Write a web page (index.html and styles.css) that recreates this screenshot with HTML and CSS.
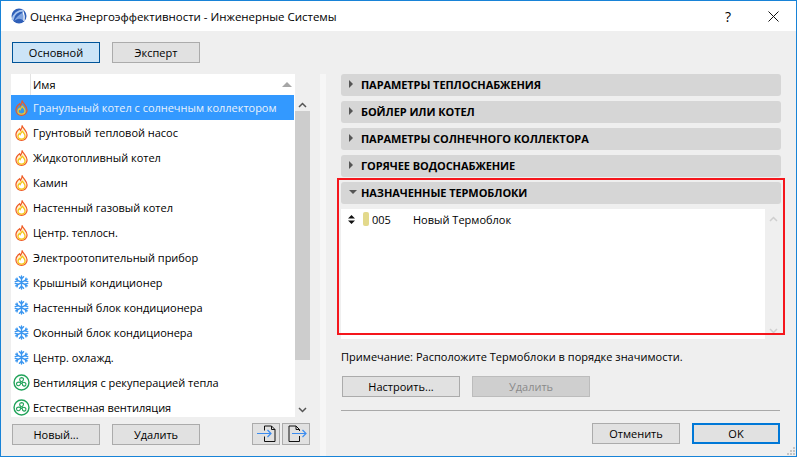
FILE: index.html
```html
<!DOCTYPE html>
<html lang="ru">
<head>
<meta charset="utf-8">
<title>Оценка Энергоэффективности - Инженерные Системы</title>
<link rel="stylesheet" href="styles.css">
</head>
<body>
<svg class="defs" width="0" height="0" aria-hidden="true">
  <symbol id="flame" viewBox="0 0 14 18">
    <path d="M7.500 0.800C8.200 3.300 6.500 4.500 6 6.200C5.500 5.500 5.200 5 5 4.300C2.600 6 1 8.300 1 11C1 14.500 3.600 17 7 17C10.400 17 13 14.500 13 11.200C13 7 9.200 5 7.500 0.800Z" fill="#fff3cf" stroke="#ef5a24" stroke-width="1.300"/>
    <path d="M7.700 6.500C7.800 8.300 6 9 5.600 10.500C5.300 10.100 5 9.900 4.800 9.500C3.700 10.500 3.200 11.500 3.200 12.500C3.200 14.300 4.900 15.500 7 15.500C9.100 15.500 10.800 14.200 10.800 12.300C10.800 10 8.800 8.700 7.700 6.500Z" fill="#fff" stroke="#f5c518" stroke-width="1.400"/>
  </symbol>
  <symbol id="flame-sel" viewBox="0 0 14 18">
    <path d="M7.500 0.800C8.200 3.300 6.500 4.500 6 6.200C5.500 5.500 5.200 5 5 4.300C2.600 6 1 8.300 1 11C1 14.500 3.600 17 7 17C10.400 17 13 14.500 13 11.200C13 7 9.200 5 7.500 0.800Z" fill="#4a93dc" stroke="#e8592a" stroke-width="1.300"/>
    <path d="M7.700 6.500C7.800 8.300 6 9 5.600 10.500C5.300 10.100 5 9.900 4.800 9.500C3.700 10.500 3.200 11.500 3.200 12.500C3.200 14.300 4.900 15.500 7 15.500C9.100 15.500 10.800 14.200 10.800 12.300C10.800 10 8.800 8.700 7.700 6.500Z" fill="#3399ee" stroke="#f2c72c" stroke-width="1.400"/>
  </symbol>
  <symbol id="snow" viewBox="0 0 16 16">
    <g stroke="#3a96f0" stroke-width="1.500" fill="none" stroke-linecap="round">
      <path d="M8 1V15M1.900 4.500L14.100 11.500M14.100 4.500L1.900 11.500"/>
      <path d="M5.800 1.800L8 4L10.200 1.800M5.800 14.200L8 12L10.200 14.200M1.300 7L3.900 6.300L3.200 3.300M14.700 9L12.100 9.700L12.800 12.700M14.700 7L12.100 6.300L12.800 3.300M1.300 9L3.900 9.700L3.200 12.700"/>
    </g>
  </symbol>
  <symbol id="fan" viewBox="0 0 18 18">
    <circle cx="9" cy="9" r="7.900" fill="#fff" stroke="#21a35a" stroke-width="1.500"/>
    <g fill="none" stroke="#21a35a" stroke-width="1.200">
      <circle cx="9" cy="9" r="1"/>
      <path d="M8.500 8C6.500 7 6.500 4 9 3.800C11.500 3.800 12 6 9.700 8"/>
      <path d="M10 9.200C12 8 14.500 9.500 13.500 11.800C12.300 13.700 10 13 9.800 10.200"/>
      <path d="M8 9.700C8 12 5.500 13.500 4 11.500C3 9.500 4.700 7.800 7.800 8.900"/>
    </g>
  </symbol>
</svg>

<div class="window">
  <header class="titlebar">
    <svg class="logo" width="16" height="16" viewBox="0 0 16 16">
      <circle cx="8" cy="8" r="7.500" fill="#2f5fb8"/>
      <path d="M1.500 12C2.500 6 7 2.500 12.500 2.500" fill="none" stroke="#a8c4ee" stroke-width="2"/>
      <path d="M3 13.500C5 9 8 7 12 4.500C13 7 13.500 10 13 13C9 9.500 6 10.500 3 13.500Z" fill="#7ea3e0"/>
      <path d="M12 3.500C13.300 6.500 13.500 10 13 13" fill="none" stroke="#fff" stroke-width="1.200"/>
    </svg>
    <span class="title">Оценка Энергоэффективности - Инженерные Системы</span>
    <span class="help">?</span>
    <svg class="close" width="11" height="11" viewBox="0 0 11 11"><path d="M0.500 0.500L10.500 10.500M10.500 0.500L0.500 10.500" stroke="#111" stroke-width="1" fill="none"/></svg>
  </header>

  <div class="main">
    <section class="left">
      <div class="btn-row tabs">
        <button class="btn active">Основной</button>
        <button class="btn">Эксперт</button>
      </div>
      <div class="listwrap">
        <div class="list">
          <div class="list-head">
            <span class="head-cell">Имя</span>
            <span class="sort"></span>
          </div>
          <div class="row selected"><svg class="ic flame"><use href="#flame-sel"/></svg><span>Гранульный котел с солнечным коллектором</span></div>
          <div class="row"><svg class="ic flame"><use href="#flame"/></svg><span>Грунтовый тепловой насос</span></div>
          <div class="row"><svg class="ic flame"><use href="#flame"/></svg><span>Жидкотопливный котел</span></div>
          <div class="row"><svg class="ic flame"><use href="#flame"/></svg><span>Камин</span></div>
          <div class="row"><svg class="ic flame"><use href="#flame"/></svg><span>Настенный газовый котел</span></div>
          <div class="row"><svg class="ic flame"><use href="#flame"/></svg><span>Центр. теплосн.</span></div>
          <div class="row"><svg class="ic flame"><use href="#flame"/></svg><span>Электроотопительный прибор</span></div>
          <div class="row"><svg class="ic snow"><use href="#snow"/></svg><span>Крышный кондиционер</span></div>
          <div class="row"><svg class="ic snow"><use href="#snow"/></svg><span>Настенный блок кондиционера</span></div>
          <div class="row"><svg class="ic snow"><use href="#snow"/></svg><span>Оконный блок кондиционера</span></div>
          <div class="row"><svg class="ic snow"><use href="#snow"/></svg><span>Центр. охлажд.</span></div>
          <div class="row"><svg class="ic fan"><use href="#fan"/></svg><span>Вентиляция с рекуперацией тепла</span></div>
          <div class="row"><svg class="ic fan"><use href="#fan"/></svg><span>Естественная вентиляция</span></div>
        </div>
        <div class="scrollbar">
          <svg class="chev-up" width="9" height="6" viewBox="0 0 9 6"><path d="M1 5L4.500 1.500L8 5" fill="none" stroke="#555" stroke-width="1.500"/></svg>
          <div class="thumb"></div>
          <svg class="chev-down" width="9" height="6" viewBox="0 0 9 6"><path d="M1 1L4.500 4.500L8 1" fill="none" stroke="#555" stroke-width="1.500"/></svg>
        </div>
      </div>
      <div class="left-foot">
        <button class="btn">Новый...</button>
        <button class="btn">Удалить</button>
        <div class="icon-btns">
          <button class="btn icon-btn">
            <svg width="22" height="18" viewBox="0 0 22 18"><path d="M9.500 5.500V1H16.500L20 4.500V16.500H9.500V11.500" fill="none" stroke="#111"/><path d="M16.500 1V4.500H20" fill="none" stroke="#111"/><path d="M2 8.500H16M12.500 5L16 8.500L12.500 12" fill="none" stroke="#3b8cf0" stroke-width="1.200"/></svg>
          </button>
          <button class="btn icon-btn">
            <svg width="22" height="18" viewBox="0 0 22 18"><path d="M4 16.500V1H11L14.500 4.500V6M14.500 11V16.500H4" fill="none" stroke="#111"/><path d="M11 1V4.500H14.500" fill="none" stroke="#111"/><path d="M7 8.500H21M17.500 5L21 8.500L17.500 12" fill="none" stroke="#3b8cf0" stroke-width="1.200"/></svg>
          </button>
        </div>
      </div>
    </section>

    <div class="splitter"></div>

    <section class="right">
      <div class="section"><span class="tri"></span>ПАРАМЕТРЫ ТЕПЛОСНАБЖЕНИЯ</div>
      <div class="section"><span class="tri"></span>БОЙЛЕР ИЛИ КОТЕЛ</div>
      <div class="section"><span class="tri"></span>ПАРАМЕТРЫ СОЛНЕЧНОГО КОЛЛЕКТОРА</div>
      <div class="section"><span class="tri"></span>ГОРЯЧЕЕ ВОДОСНАБЖЕНИЕ</div>
      <div class="assigned">
        <div class="section"><span class="tri open"></span>НАЗНАЧЕННЫЕ ТЕРМОБЛОКИ</div>
        <div class="blocks">
          <div class="blocks-list">
            <div class="block-row">
              <svg class="updown" width="7" height="9" viewBox="0 0 7 9"><path d="M3.500 0L7 3.500H0ZM3.500 9L0 5.500H7Z" fill="#111"/></svg>
              <span class="swatch"></span>
              <span class="code">005</span>
              <span>Новый Термоблок</span>
            </div>
          </div>
          <div class="blocks-scroll">
            <svg width="9" height="6" viewBox="0 0 9 6"><path d="M1 5L4.500 1.500L8 5" fill="none" stroke="#cfcfcf" stroke-width="1.500"/></svg>
            <svg width="9" height="6" viewBox="0 0 9 6"><path d="M1 1L4.500 4.500L8 1" fill="none" stroke="#cfcfcf" stroke-width="1.500"/></svg>
          </div>
        </div>
        <div class="highlight"></div>
      </div>
      <p class="note">Примечание: Расположите Термоблоки в порядке значимости.</p>
      <div class="actions">
        <button class="btn wide">Настроить...</button>
        <button class="btn wide disabled">Удалить</button>
      </div>
      <div class="divider"></div>
      <div class="dialog-btns">
        <button class="btn">Отменить</button>
        <button class="btn default">OK</button>
      </div>
    </section>
  </div>
  <svg class="grip" width="9" height="9" viewBox="0 0 9 9"><path d="M6 0h2v2H6zM3 3h2v2H3zM6 3h2v2H6zM0 6h2v2H0zM3 6h2v2H3zM6 6h2v2H6z" fill="#c4c4c4"/></svg>
</div>
</body>
</html>
```

FILE: styles.css
```css
* { box-sizing: border-box; }
html, body { margin: 0; padding: 0; }
body {
  width: 797px;
  height: 457px;
  overflow: hidden;
  font-family: "Open Sans", "Noto Sans", sans-serif;
  font-size: 11px;
  color: #000;
}
.defs { position: absolute; }
.window {
  position: relative;
  width: 797px;
  height: 457px;
  border: 1px solid #1883d7;
  background: #efefef;
  display: flex;
  flex-direction: column;
}
.titlebar {
  height: 30px;
  flex: none;
  background: #fff;
  display: flex;
  align-items: center;
  padding-left: 10px;
}
.logo { flex: none; }
.title { margin-left: 3px; font-size: 11.5px; letter-spacing: -0.02px; }
.help { margin-left: auto; font-size: 14px; width: 12px; text-align: center; }
.close { margin-left: 34px; margin-right: 17px; }

.main { flex: 1; display: flex; min-height: 0; }
.left { width: 309px; flex: none; padding-left: 10px; padding-top: 11px; display: flex; flex-direction: column; }
.btn-row { display: flex; gap: 12px; padding-left: 1px; }
.btn {
  width: 88px;
  height: 21px;
  padding: 0;
  border: 1px solid #ababab;
  background: #e1e1e1;
  color: #000;
  font: inherit;
  text-align: center;
}
.btn.active { background: #cce4f7; border-color: #005499; }
.listwrap { display: flex; margin-top: 11px; height: 343px; }
.list { width: 284px; background: #fff; flex: none; }
.list-head { height: 21px; width: 282px; display: flex; align-items: center; padding-left: 19px; }
.head-cell { border-left: 1px solid #e3e3e3; padding-left: 2px; height: 21px; line-height: 21px; }
.sort {
  margin-left: auto;
  margin-right: 1px;
  width: 0; height: 0;
  border-left: 5px solid transparent;
  border-right: 5px solid transparent;
  border-bottom: 5px solid #a6a6a6;
}
.row { height: 25px; display: flex; align-items: center; white-space: nowrap; letter-spacing: -0.02px; }
.row.selected { background: #3399ff; color: #e9f2fb; width: 283px; }
.ic { flex: none; display: block; }
.flame { width: 13px; height: 18px; margin-left: 4px; margin-right: 5px; }
.snow { width: 15px; height: 15px; margin-left: 3px; margin-right: 4px; }
.fan { width: 17px; height: 17px; margin-left: 2px; margin-right: 3px; }
.scrollbar { width: 15px; flex: none; display: flex; flex-direction: column; align-items: center; padding-top: 21px; }
.chev-up { margin-top: 7px; }
.thumb { width: 15px; height: 249px; background: #cdcdcd; margin-top: 3px; }
.chev-down { margin-top: 47px; }
.left-foot { display: flex; gap: 12px; margin-top: 7px; padding-left: 1px; width: 299px; }
.icon-btns { display: flex; gap: 2px; margin-left: auto; margin-top: -1px; }
.icon-btn { width: 28px; height: 22px; display: flex; align-items: center; justify-content: center; }
.icon-btn svg { display: block; }

.splitter { width: 6px; flex: none; background: #f6f6f6; margin-left: 10px; margin-top: 43px; }
.right { width: 440px; flex: none; margin-left: 15px; padding-top: 43px; display: flex; flex-direction: column; gap: 5px; }
.section {
  height: 22px;
  flex: none;
  background: #d6d6d6;
  border-radius: 3px;
  display: flex;
  align-items: center;
  font-weight: 700;
  font-size: 11px;
  letter-spacing: -0.08px;
  color: #000;
  padding-left: 8px;
  padding-bottom: 2px;
}
.tri {
  width: 0; height: 0;
  margin-right: 8px;
  border-top: 4px solid transparent;
  border-bottom: 4px solid transparent;
  border-left: 4px solid #555;
}
.tri.open {
  margin-right: 4px;
  border-left: 4px solid transparent;
  border-right: 4px solid transparent;
  border-top: 4px solid #555;
  border-bottom: 0;
}
.assigned { position: relative; display: flex; flex-direction: column; gap: 5px; }
.blocks { display: flex; height: 130px; }
.blocks-list { width: 424px; background: #fff; flex: none; }
.blocks-scroll { width: 16px; flex: none; display: flex; flex-direction: column; justify-content: space-between; align-items: center; padding: 7px 0 5px; }
.block-row { height: 20px; display: flex; align-items: center; padding-left: 7px; }
.swatch { width: 6px; height: 14px; background: #e3d98c; border-radius: 2px; margin-left: 8px; margin-right: 3px; }
.code { width: 41px; }
.highlight {
  position: absolute;
  left: -4px;
  right: -4px;
  top: -4px;
  height: 157px;
  border: 2px solid #f5161c;
  pointer-events: none;
}
.note { margin: 5px 0 0; height: 17px; line-height: 16px; letter-spacing: 0.02px; }
.actions { display: flex; gap: 12px; padding-left: 1px; margin-top: 5px; }
.btn.wide { width: 118px; }
.btn.disabled { background: #cfcfcf; border-color: #bcbcbc; color: #8a8a8a; }
.divider { height: 1px; background: #a9a9a9; margin-top: 8px; width: 439px; }
.dialog-btns { display: flex; justify-content: flex-end; gap: 12px; margin-top: 7px; width: 439px; }
.btn.default { border: 2px solid #0078d7; }
.grip { position: absolute; right: 0; bottom: 0; }
```
